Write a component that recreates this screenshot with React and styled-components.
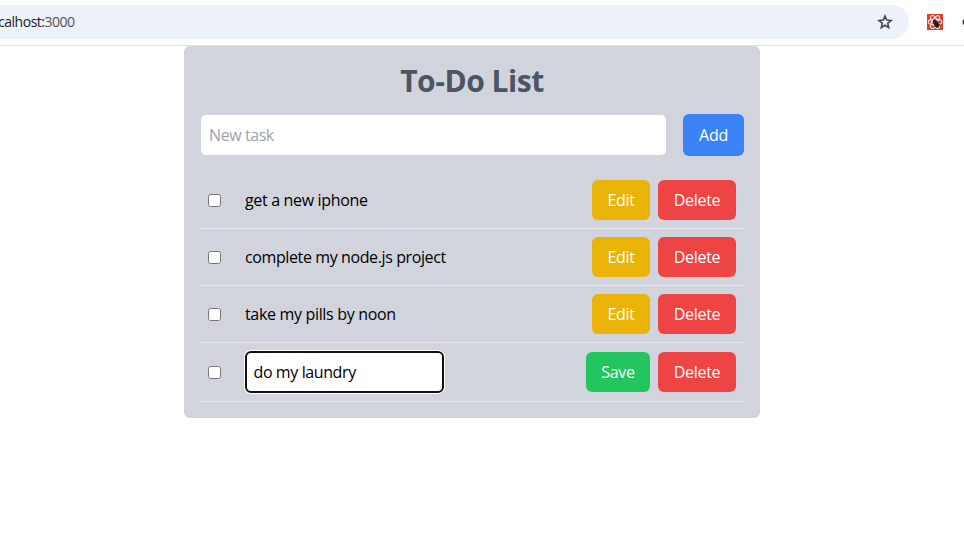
import React from "react";
import styled, { createGlobalStyle } from "styled-components";

const GlobalStyle = createGlobalStyle`
  *, *::before, *::after { box-sizing: border-box; }
  body {
    margin: 0;
    overflow: hidden;
    background: #fff;
    color: #000;
    font: 400 16px/24px "Open Sans", "Noto Sans", sans-serif;
  }
  input, button { font: inherit; color: inherit; letter-spacing: inherit; }
`;

const BrowserBar = styled.header`
  display: flex;
  align-items: center;
  height: 46px;
  padding-bottom: 1px;
  border-bottom: 1px solid #dfe1e1;
  overflow: hidden;
`;

const AddressBar = styled.div`
  flex: none;
  display: flex;
  align-items: center;
  justify-content: space-between;
  width: 909px;
  height: 34px;
  padding-right: 16px;
  border-radius: 0 17px 17px 0;
  background: #ecf1fa;
`;

const Url = styled.span`
  margin-left: -2px;
  color: #1f2023;
  font-size: 14px;
  letter-spacing: -0.48px;
`;

const Port = styled.span`
  color: #50545a;
`;

const ExtensionIcon = styled.svg`
  flex: none;
  margin-left: 18px;
`;

const EdgeIcon = styled.svg`
  flex: none;
  margin-left: 19px;
`;

const Card = styled.main`
  width: 576px;
  margin-left: 184px;
  padding: 16px;
  border-radius: 6px;
  background: #d1d4dc;
`;

const Title = styled.h1`
  margin: 0 0 15px;
  padding-top: 1px;
  color: #4b5563;
  font-size: 30px;
  font-weight: 700;
  line-height: 36px;
  text-align: center;
  letter-spacing: -0.45px;
`;

const AddForm = styled.form`
  display: flex;
  gap: 16px;
  height: 42px;
  margin-bottom: 16px;
`;

const TaskInput = styled.input`
  flex: 1;
  min-width: 0;
  padding: 0 8px;
  border: 1px solid #d1d4dc;
  border-radius: 6px;
  background: #fff;
  outline: none;
  letter-spacing: -0.42px;
  &::placeholder { color: #9ca3af; opacity: 1; }
`;

const tones = {
  blue: "#3b82f6",
  yellow: "#eab308",
  red: "#ef4444",
  green: "#22c55e",
};

const Button = styled.button`
  flex: none;
  width: ${(p) => p.$width}px;
  height: ${(p) => p.$height || 40}px;
  padding: 0;
  border: 0;
  border-radius: 6px;
  background: ${(p) => tones[p.$tone]};
  color: #fff;
  text-align: center;
  letter-spacing: -0.3px;
`;

const TaskList = styled.ul`
  margin: 0;
  padding: 0;
  list-style: none;
`;

const TaskRow = styled.li`
  display: flex;
  align-items: center;
  padding: 8px;
  border-bottom: 1px solid #e5e7eb;
`;

const Checkbox = styled.input`
  flex: none;
  width: 13px;
  height: 13px;
  margin: 0 24px 0 0;
`;

const TaskText = styled.span`
  letter-spacing: ${(p) => p.$spacing}px;
`;

const EditInput = styled.input`
  width: 199px;
  height: 42px;
  padding: 0 6.5px;
  border: 2px solid #101010;
  border-radius: 6px;
  background: #fff;
  box-shadow: 0 0 0 1px #fff;
  outline: none;
  letter-spacing: -0.4px;
`;

const Actions = styled.div`
  display: flex;
  gap: 8px;
  margin-left: auto;
`;

const tasks = [
  { text: "get a new iphone", spacing: -0.34 },
  { text: "complete my node.js project", spacing: -0.39 },
  { text: "take my pills by noon", spacing: -0.33 },
  { text: "do my laundry", editing: true },
];

function Star() {
  return (
    <svg width="16" height="16" viewBox="0 0 16 16" fill="none" stroke="#44474b" strokeWidth="1.6">
      <path d="M8 2.1 9.7 6.1 14 6.5 10.7 9.3 11.7 13.6 8 11.3 4.3 13.6 5.3 9.3 2 6.5 6.3 6.1Z" />
    </svg>
  );
}

function ReactExtension() {
  return (
    <ExtensionIcon width="16" height="16" viewBox="0 0 16 16">
      <rect width="16" height="16" fill="#d9412f" />
      <g fill="none" stroke="#fbe3de" strokeWidth="1.1">
        <ellipse cx="8" cy="8" rx="6.8" ry="2.9" />
        <ellipse cx="8" cy="8" rx="7.2" ry="2.9" transform="rotate(60 8 8)" />
        <ellipse cx="8" cy="8" rx="7.2" ry="2.9" transform="rotate(120 8 8)" />
      </g>
      <circle cx="7.5" cy="7" r="1.7" fill="#28201f" />
      <ellipse cx="9.6" cy="10.4" rx="2.6" ry="3.3" fill="#28201f" transform="rotate(-28 9.6 10.4)" />
      <path d="M5.5 9.5 12.5 7.5M6.5 12.5 13 10.5" stroke="#28201f" strokeWidth=".8" />
    </ExtensionIcon>
  );
}

export default function App() {
  return (
    <>
      <GlobalStyle />
      <BrowserBar>
        <AddressBar>
          <Url>calhost:<Port>3000</Port></Url>
          <Star />
        </AddressBar>
        <ReactExtension />
        <EdgeIcon width="8" height="8" viewBox="0 0 8 8">
          <circle cx="4" cy="4" r="3.5" fill="#3c3f43" />
        </EdgeIcon>
      </BrowserBar>
      <Card>
        <Title>To-Do List</Title>
        <AddForm onSubmit={(e) => e.preventDefault()}>
          <TaskInput placeholder="New task" />
          <Button $tone="blue" $width={61} $height={42}>Add</Button>
        </AddForm>
        <TaskList>
          {tasks.map((task) => (
            <TaskRow key={task.text}>
              <Checkbox type="checkbox" />
              {task.editing ? (
                <EditInput defaultValue={task.text} />
              ) : (
                <TaskText $spacing={task.spacing}>{task.text}</TaskText>
              )}
              <Actions>
                {task.editing ? (
                  <Button $tone="green" $width={64}>Save</Button>
                ) : (
                  <Button $tone="yellow" $width={58}>Edit</Button>
                )}
                <Button $tone="red" $width={78}>Delete</Button>
              </Actions>
            </TaskRow>
          ))}
        </TaskList>
      </Card>
    </>
  );
}
